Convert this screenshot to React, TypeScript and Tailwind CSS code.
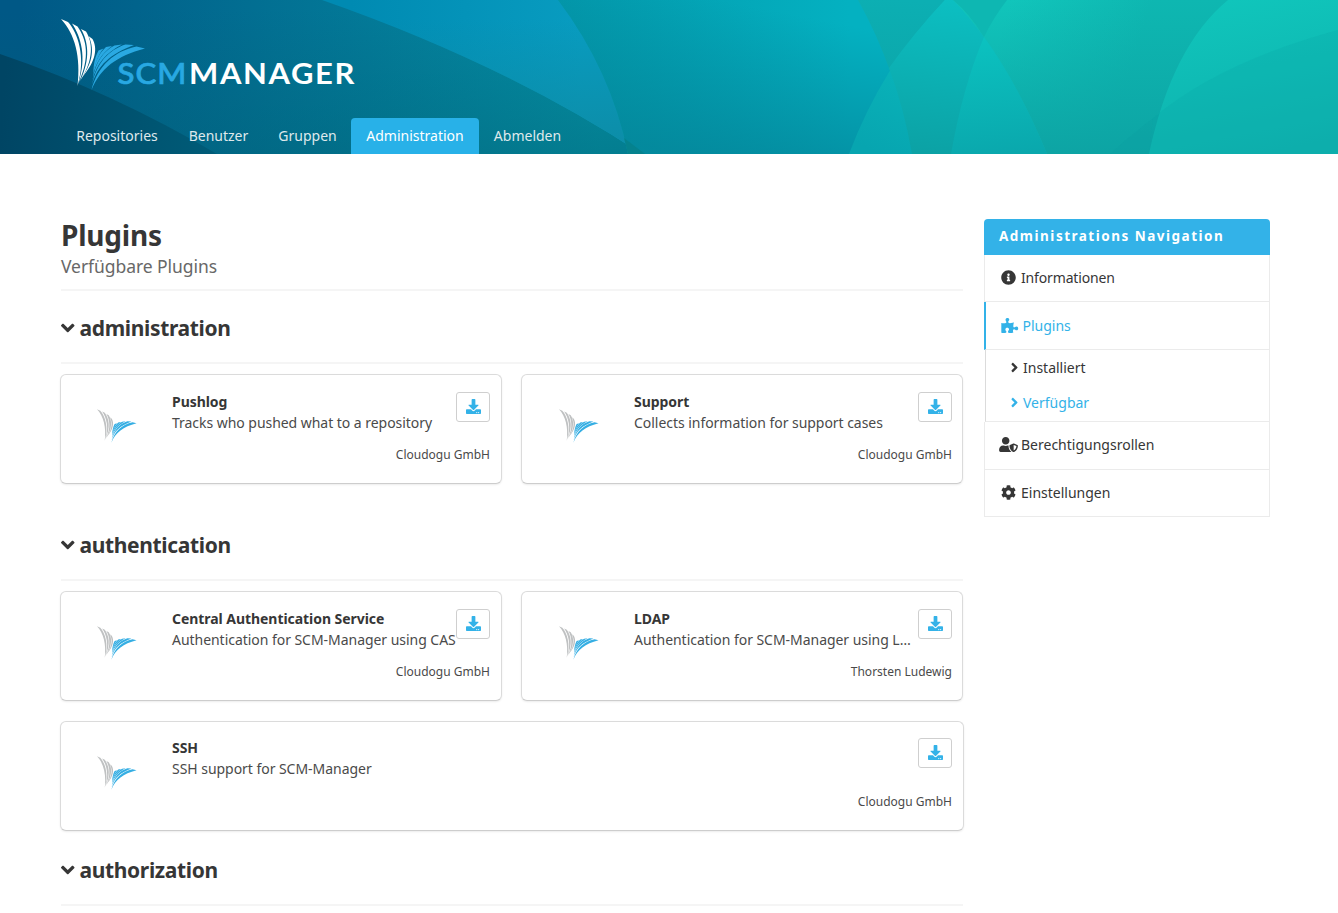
import type { ReactNode } from "react";
import {
  FaAngleDown,
  FaAngleRight,
  FaCog,
  FaDownload,
  FaInfoCircle,
  FaPuzzlePiece,
  FaUserShield,
} from "react-icons/fa";

const LEFT_BLADES = [
  "M0 0 L7 3 C16.5 13 25.5 38 16.5 67 C20 38 14 15 0 0Z",
  "M11 4.5 L16.5 7.5 C25.5 20 29.5 38 17.5 64 C26 38 20 18 11 4.5Z",
  "M20 10 L25 12.5 C31.5 23 33.5 40 19 62 C30 40 27 22 20 10Z",
  "M27.5 17 L31.5 20 C36.5 29 35.5 42 20.5 59 C33 42 33 28 27.5 17Z",
];

const RIGHT_BLADES = [
  "M84 29.5 L75.5 27.5 C53.5 32 36.5 47 30.5 71 C39.5 49 55.5 37 84 29.5Z",
  "M73 26 L64.5 25.5 C47.5 31 35.5 44 31 66 C36.5 46 49.5 35 73 26Z",
  "M61 25.5 L53.5 26.5 C42.5 32 34.5 43 31.5 61 C35.5 45 44.5 34 61 25.5Z",
  "M51 27 L45 28 C38.5 34 33 43 32 57 C34.5 44 40.5 35 51 27Z",
  "M42.5 29.5 L37.5 31.5 C34.5 37 32.5 44 32.5 53 C34.5 44 37 36 42.5 29.5Z",
];

function Blades({ className, left, right }: { className: string; left: string; right: string }) {
  return (
    <svg viewBox="0 0 85 71" className={className} aria-hidden="true">
      {LEFT_BLADES.map((d) => (
        <path key={d} d={d} fill={left} />
      ))}
      {RIGHT_BLADES.map((d) => (
        <path key={d} d={d} fill={right} />
      ))}
    </svg>
  );
}

function Gradient({ id, from, to, x1 = 0, y1 = 0, x2 = 0, y2 = 154 }: {
  id: string; from: string; to: string; x1?: number; y1?: number; x2?: number; y2?: number;
}) {
  return (
    <linearGradient id={id} gradientUnits="userSpaceOnUse" x1={x1} y1={y1} x2={x2} y2={y2}>
      <stop offset="0" stopColor={from} />
      <stop offset="1" stopColor={to} />
    </linearGradient>
  );
}

function HeaderBackdrop() {
  return (
    <svg viewBox="0 0 1338 154" preserveAspectRatio="none" className="absolute inset-0 h-full w-full" aria-hidden="true">
      <defs>
        <Gradient id="deep" from="#005886" to="#0590a4" x1={20} y1={60} x2={600} y2={60} />
        <Gradient id="deepShade" from="#005f7000" to="#005f7060" y1={10} />
        <Gradient id="corner" from="#004564" to="#005c78" x1={0} y1={140} x2={215} y2={154} />
        <Gradient id="sky" from="#008ab2" to="#089cc0" x1={350} y1={0} x2={580} y2={0} />
        <Gradient id="skyShade" from="#0d8ca600" to="#0d8ca6" y1={20} />
        <Gradient id="sea" from="#0399ac" to="#04b1c1" x1={560} x2={850} y2={0} />
        <Gradient id="seaShade" from="#04849800" to="#048498cc" x1={720} x2={690} />
        <Gradient id="teal" from="#0cafb3" to="#0ba1a4" x1={900} x2={890} />
        <Gradient id="lens" from="#0bc0c2" to="#07a5b0" x1={950} x2={880} />
        <Gradient id="lensRight" from="#0cbfc2" to="#0ca2a5" x1={960} x2={940} />
        <Gradient id="green" from="#11c5bb" to="#0eb7b1" x1={1010} x2={1140} y2={40} />
        <Gradient id="greenShade" from="#0da6a600" to="#0da4a4" />
        <Gradient id="blend" from="#0bc2c0" to="#0aa8ad" x1={990} y1={37} x2={1000} />
        <Gradient id="end" from="#10c5bb" to="#0eb1ae" x1={1230} x2={1260} />
      </defs>
      <rect width="1338" height="154" fill="url(#deep)" />
      <rect width="700" height="154" fill="url(#deepShade)" />
      <path d="M0 54 Q112 92 217 154 H0Z" fill="url(#corner)" />
      <path d="M322 0 Q505 64 642 154 H700 V0Z" fill="url(#sky)" />
      <path d="M322 0 Q505 64 642 154 H700 V0Z" fill="url(#skyShade)" />
      <path d="M558 0 Q611 70 628 154 H920 V0Z" fill="url(#sea)" />
      <path d="M558 0 Q611 70 628 154 H920 V0Z" fill="url(#seaShade)" />
      <path d="M624 138 L645 154 H628Z" fill="#067f88" fillOpacity=".7" />
      <path d="M858 0 Q897 70 912 154 H1338 V0Z" fill="url(#teal)" />
      <path d="M945 0 Q882 66 849 154 H1047 Q1000 40 953 0Z" fill="url(#lens)" />
      <path d="M889 68 Q904 108 912 154 H1047 Q1000 40 953 0 H945 Q913 34 889 68Z" fill="url(#lensRight)" />
      <path d="M953 0 Q1005 53 1047 154 H1338 V0Z" fill="url(#green)" />
      <path d="M953 0 Q1005 53 1047 154 H1338 V0Z" fill="url(#greenShade)" />
      <path d="M953 0 H1007 Q993 18 984 37 Q970 14 953 0Z" fill="#0eb7b2" />
      <path d="M984 37 Q963 86 951 154 H1047 Q1018 84 984 37Z" fill="url(#blend)" />
      <path d="M1338 30 Q1205 66 1110 154 H1338Z" fill="#0c9a9f" fillOpacity=".2" />
      <path d="M1228 0 Q1172 46 1149 154 H1338 V0Z" fill="url(#end)" />
      <path d="M1338 30 Q1220 62 1153 118 L1149 154 H1338Z" fill="#0ca8aa" fillOpacity=".28" />
    </svg>
  );
}

function Brand() {
  return (
    <a className="relative block h-[71px] w-[294px]" aria-label="SCM-Manager">
      <Blades className="absolute left-0 top-0 h-[71px] w-[85px]" left="#ffffff" right="#2aa9e2" />
      <svg viewBox="0 0 294 71" className="absolute inset-0 h-full w-full">
        <text x="56.5" y="64.5" textLength="70" lengthAdjust="spacingAndGlyphs" fill="#28a8e2" stroke="#28a8e2" strokeWidth=".7" className="font-['Lato'] text-[28.5px] font-medium tracking-[1px]">SCM</text>
        <text x="128" y="64.5" textLength="167" lengthAdjust="spacingAndGlyphs" fill="#ffffff" className="font-['Lato'] text-[28.5px] font-bold tracking-[1.5px]">MANAGER</text>
      </svg>
    </a>
  );
}

const TABS = [
  { label: "Repositories", width: "w-[112px]" },
  { label: "Benutzer", width: "w-[91px]" },
  { label: "Gruppen", width: "w-[87px]" },
  { label: "Administration", width: "w-[128px]", active: true },
  { label: "Abmelden", width: "w-[97px]" },
];

function Header() {
  return (
    <header className="relative h-[154px]">
      <HeaderBackdrop />
      <div className="relative flex h-full flex-col justify-between pl-[61px] pt-[19px]">
        <Brand />
        <nav className="flex">
          {TABS.map((tab) => (
            <a
              key={tab.label}
              className={`flex h-9 items-center justify-center whitespace-nowrap rounded-t pb-0.5 ${tab.width} ${
                tab.active ? "bg-[#28b1e8] text-white" : "text-[#dfe9ec]"
              }`}
            >
              {tab.label}
            </a>
          ))}
        </nav>
      </div>
    </header>
  );
}

type Plugin = { name: string; description: string; author: string; wide?: boolean };

const CATEGORIES: { name: string; plugins: Plugin[] }[] = [
  {
    name: "administration",
    plugins: [
      { name: "Pushlog", description: "Tracks who pushed what to a repository", author: "Cloudogu GmbH" },
      { name: "Support", description: "Collects information for support cases", author: "Cloudogu GmbH" },
    ],
  },
  {
    name: "authentication",
    plugins: [
      { name: "Central Authentication Service", description: "Authentication for SCM-Manager using CAS", author: "Cloudogu GmbH" },
      { name: "LDAP", description: "Authentication for SCM-Manager using L…", author: "Thorsten Ludewig" },
      { name: "SSH", description: "SSH support for SCM-Manager", author: "Cloudogu GmbH", wide: true },
    ],
  },
  { name: "authorization", plugins: [] },
];

function PluginCard({ plugin }: { plugin: Plugin }) {
  return (
    <article
      className={`flex h-[110px] rounded-md border border-[#dbdbdb] border-b-[#cdcdcd] bg-white pl-9 pr-[11px] shadow-[0_1px_2px_rgba(0,0,0,0.08)] even:pl-[37px] even:pr-[10px] ${
        plugin.wide ? "col-span-2 mt-5 w-[904px]" : ""
      }`}
    >
      <Blades className="mt-[34px] h-[34px] w-10 shrink-0" left="#bfc1c2" right="#35aee3" />
      <div className={`ml-[35px] flex min-w-0 flex-1 flex-col ${plugin.wide ? "pt-[15px]" : "pt-4"}`}>
        <div className="flex justify-between">
          <div className="w-0 flex-1 whitespace-nowrap leading-[21px]">
            <h3 className="font-bold tracking-[-0.05px] text-[#363636]">{plugin.name}</h3>
            <p className="tracking-[-0.04px] text-[#4a4a4a]">{plugin.description}</p>
          </div>
          <button className="mt-px flex h-[30px] w-[34px] items-center justify-center rounded-[3px] border border-[#cfcfcf] bg-white pb-px text-[15px] text-[#33b2e8]">
            <FaDownload />
          </button>
        </div>
        <p className={`text-right text-[12px] leading-[18px] text-[#4a4a4a] ${plugin.wide ? "mt-[14px]" : "mt-[13px]"}`}>
          {plugin.author}
        </p>
      </div>
    </article>
  );
}

function Category({ name, plugins }: { name: string; plugins: Plugin[] }) {
  return (
    <section className={plugins.some((p) => p.wide) ? "mb-[22px]" : "mb-[44px]"}>
      <h2 className="flex h-[34px] items-center gap-[5px] text-[21px] font-bold tracking-[-0.35px] text-[#363636]">
        <FaAngleDown className="h-[22px] w-[13.5px]" />
        <span className="pt-0.5">{name}</span>
      </h2>
      <div className="mt-[17px] h-0.5 bg-[#f5f5f5]" />
      <div className="-ml-px mt-[10px] grid w-[904px] grid-cols-[442px_442px] gap-x-[19px]">
        {plugins.map((p) => (
          <PluginCard key={p.name} plugin={p} />
        ))}
      </div>
    </section>
  );
}

function NavEntry({ icon, label, active = false, className = "" }: { icon: ReactNode; label: string; active?: boolean; className?: string }) {
  return (
    <a
      className={`flex items-center border-b border-b-[#ebebeb] ${
        active ? "h-12 border-l-2 border-l-[#33b2e8] pl-[15px] text-[#33b2e8]" : "border-l border-l-[#ebebeb] text-[#363636]"
      } ${className}`}
    >
      {icon}
      {label}
    </a>
  );
}

function Sidebar() {
  return (
    <aside className="w-[286px]">
      <p className="flex h-9 items-center rounded-t-[4px] bg-[#33b2e8] pl-[15px] pb-0.5 text-[13.5px] font-bold tracking-[1.5px] text-white">
        Administrations Navigation
      </p>
      <div className="border-r border-[#ebebeb]">
        <NavEntry className="h-[47px] pb-px pl-4 tracking-[-0.15px]" icon={<FaInfoCircle className="mr-[5px] text-[15px]" />} label="Informationen" />
        <NavEntry active icon={<FaPuzzlePiece className="mr-1 h-[15px] w-[17.5px]" />} label="Plugins" />
        <div className="ml-px flex h-[72px] flex-col border-b border-l border-b-[#ebebeb] border-l-[#dbdbdb] pl-6">
          <a className="flex h-[35px] items-center gap-1 text-[#363636]">
            <FaAngleRight className="h-[15px] w-[9px]" />
            Installiert
          </a>
          <a className="flex h-[35px] items-center gap-1 text-[#33b2e8]">
            <FaAngleRight className="h-[15px] w-[9px]" />
            Verfügbar
          </a>
        </div>
        <NavEntry className="h-12 pb-0.5 pl-[14px]" icon={<FaUserShield className="mr-[3px] h-[15px] w-[19px]" />} label="Berechtigungsrollen" />
        <NavEntry className="h-[47px] pb-px pl-4" icon={<FaCog className="mr-[5px] text-[15px]" />} label="Einstellungen" />
      </div>
    </aside>
  );
}

export default function App() {
  return (
    <div className="h-[913px] w-[1338px] overflow-hidden bg-white font-['Noto_Sans',sans-serif] text-[14px] text-[#363636]">
      <Header />
      <div className="flex gap-[21px] pl-[61px] pt-[65px]">
        <main className="w-[902px]">
          <h1 className="-mt-px text-[28px] font-bold leading-[34px] tracking-[-0.2px] text-[#363636]">Plugins</h1>
          <p className="text-[17.5px] leading-[28px] tracking-[-0.06px] text-[#686868]">Verfügbare Plugins</p>
          <div className="mb-5 mt-[9px] h-0.5 bg-[#f5f5f5]" />
          {CATEGORIES.map((category) => (
            <Category key={category.name} {...category} />
          ))}
        </main>
        <Sidebar />
      </div>
    </div>
  );
}
